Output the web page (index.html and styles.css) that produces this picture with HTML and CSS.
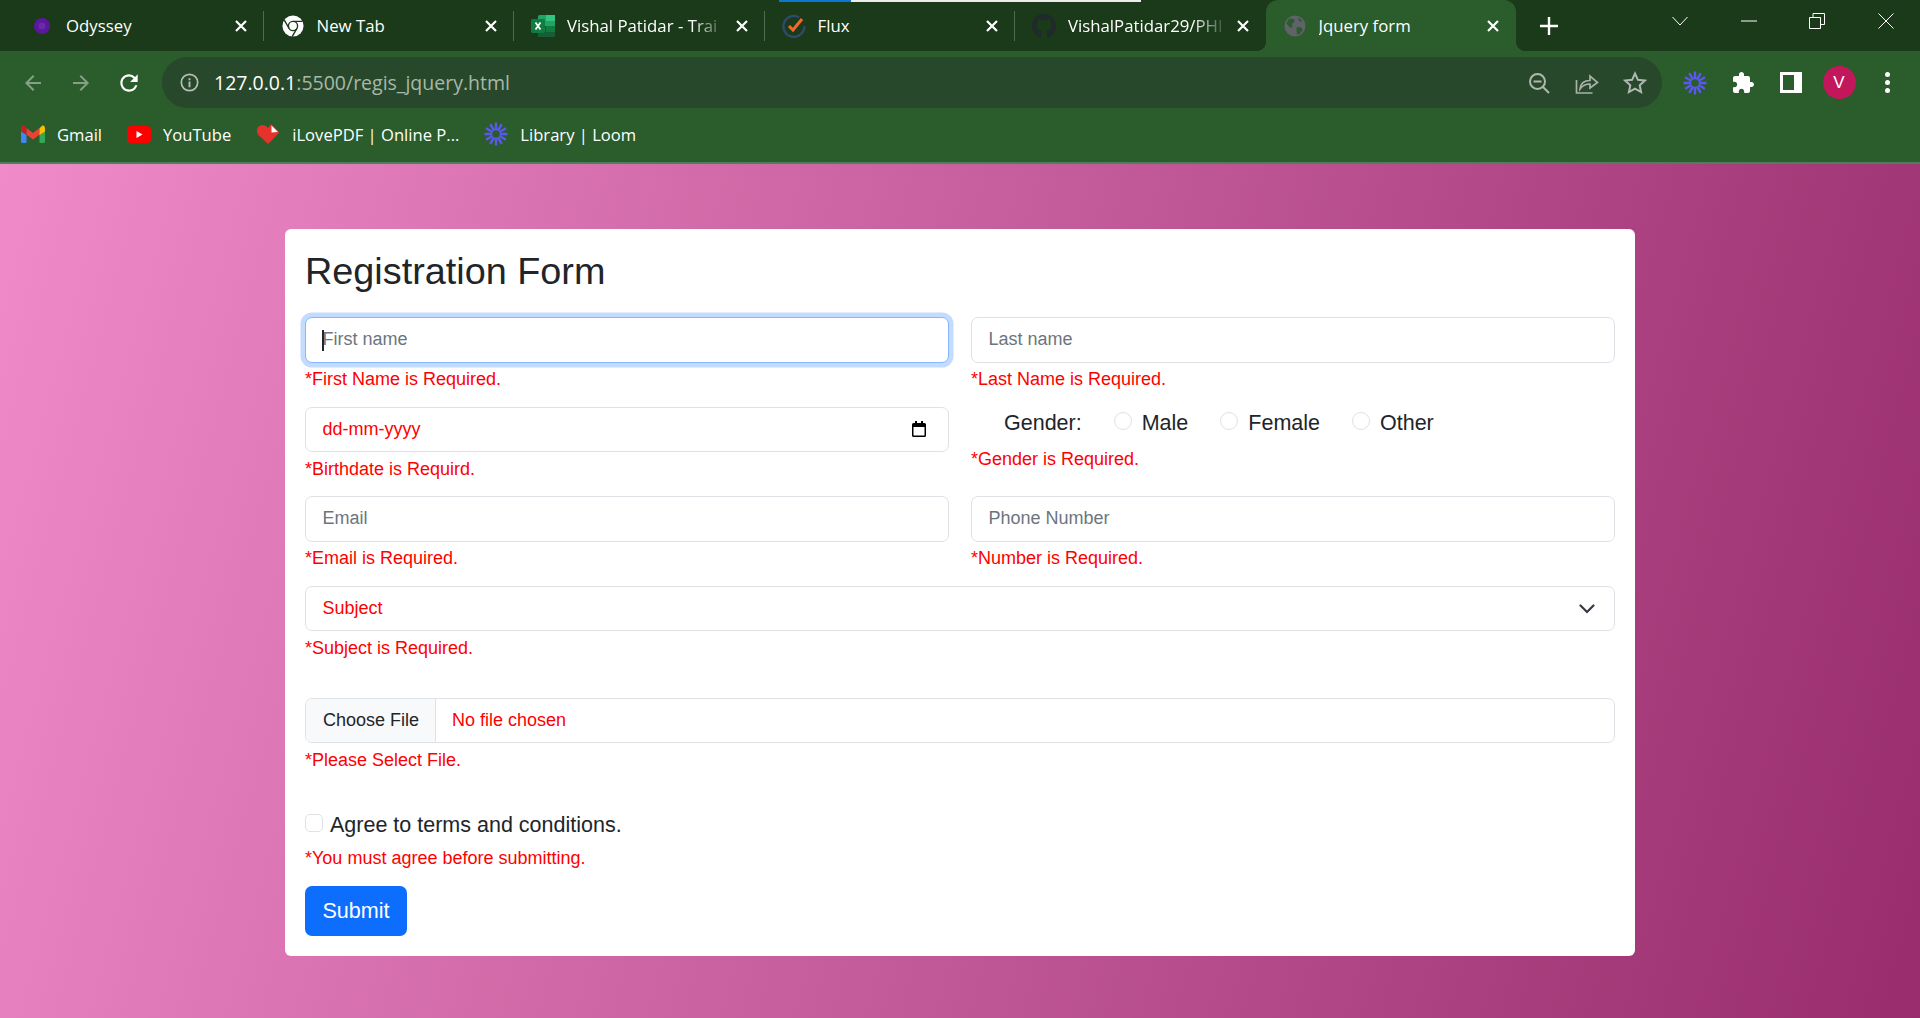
FILE: index.html
```html
<!DOCTYPE html>
<html lang="en">
<head>
    <meta charset="UTF-8">
    <meta name="viewport" content="width=device-width, initial-scale=1.0">
    <link rel="stylesheet" href="styles.css">
    <title>Jquery form</title>
</head>
<body>
<svg class="defs" width="0" height="0">
    <symbol id="loom" viewBox="0 0 24 24">
        <path fill="none" stroke="#5a58f0" stroke-width="2.4" d="M12 7V.5M14.5 7.67l3.25-5.63M16.33 9.5l5.63-3.25M17 12h6.5M16.33 14.5l5.63 3.25M14.5 16.33l3.25 5.63M12 17v6.5M9.5 16.33l-3.25 5.63M7.67 14.5l-5.63 3.25M7 12H.5M7.67 9.5L2.04 6.25M9.5 7.67L6.25 2.04"/>
        <circle cx="12" cy="12" r="4.6" fill="none" stroke="#5a58f0" stroke-width="1.6"/>
    </symbol>
    <symbol id="close" viewBox="0 0 14 14">
        <path stroke="#fff" stroke-width="2.2" d="M2 2l10 10M12 2L2 12"/>
    </symbol>
</svg>

<div class="capture-bar"><span class="capture-done"></span></div>

<div class="tabstrip">
    <div class="tab">
        <svg class="favicon" viewBox="0 0 18 18"><circle cx="9" cy="9" r="8" fill="#5a189a"/><circle cx="9" cy="9" r="3.5" fill="#6a2ab0"/></svg>
        <span class="tab-title">Odyssey</span>
        <svg class="tab-close"><use href="#close"/></svg>
    </div>
    <div class="tab">
        <svg class="favicon chrome" viewBox="0 0 24 24">
            <circle cx="12" cy="12" r="11.5" fill="#fff"/>
            <circle cx="12" cy="12" r="5" fill="#fff" stroke="#1a3a1a" stroke-width="1.5"/>
            <path stroke="#1a3a1a" stroke-width="1.5" fill="none" d="M12 7h10.5M7.7 14.5L2.5 5.5M16.3 14.5l-5.2 9"/>
        </svg>
        <span class="tab-title">New Tab</span>
        <svg class="tab-close"><use href="#close"/></svg>
    </div>
    <div class="tab">
        <svg class="favicon large" viewBox="0 0 24 24">
            <rect x="7" y="1" width="17" height="22" rx="1.5" fill="#21a366"/>
            <rect x="15" y="1" width="9" height="6" fill="#33c481"/>
            <rect x="15" y="12" width="9" height="6" fill="#107c41"/>
            <rect x="7" y="12" width="8" height="6" fill="#185c37"/>
            <rect x="7" y="18" width="17" height="5" fill="#185c37"/>
            <rect x="0" y="5" width="14" height="14" rx="1.5" fill="#107c41"/>
            <path stroke="#fff" stroke-width="1.8" d="M4.5 8.5l5 7M9.5 8.5l-5 7"/>
        </svg>
        <span class="tab-title fade">Vishal Patidar - Trai</span>
        <svg class="tab-close"><use href="#close"/></svg>
    </div>
    <div class="tab">
        <svg class="favicon large" viewBox="0 0 24 24">
            <path fill="none" stroke="#2f4a6b" stroke-width="2.4" d="M17 3.200A10.500 10.500 0 1 0 22.400 12"/>
            <path fill="none" stroke="#f2682a" stroke-width="3" d="M7 12l4 4 9-11"/>
        </svg>
        <span class="tab-title">Flux</span>
        <svg class="tab-close"><use href="#close"/></svg>
    </div>
    <div class="tab no-sep">
        <svg class="favicon large" viewBox="0 0 16 16"><path fill="#20292c" d="M8 0C3.58 0 0 3.58 0 8c0 3.54 2.29 6.53 5.47 7.59.4.07.55-.17.55-.38 0-.19-.01-.82-.01-1.49-2.01.37-2.53-.49-2.69-.94-.09-.23-.48-.94-.82-1.13-.28-.15-.68-.52-.01-.53.63-.01 1.08.58 1.23.82.72 1.21 1.87.87 2.33.66.07-.52.28-.87.51-1.07-1.78-.2-3.64-.89-3.64-3.95 0-.87.31-1.59.82-2.15-.08-.2-.36-1.02.08-2.12 0 0 .67-.21 2.2.82.64-.18 1.32-.27 2-.27s1.36.09 2 .27c1.53-1.04 2.2-.82 2.2-.82.44 1.1.16 1.92.08 2.12.51.56.82 1.27.82 2.15 0 3.07-1.87 3.75-3.65 3.95.29.25.54.73.54 1.48 0 1.07-.01 1.93-.01 2.2 0 .21.15.46.55.38A8.013 8.013 0 0016 8c0-4.42-3.58-8-8-8z"/></svg>
        <span class="tab-title fade">VishalPatidar29/PHI</span>
        <svg class="tab-close"><use href="#close"/></svg>
    </div>
    <div class="tab active">
        <svg class="favicon globe" viewBox="0 0 24 24">
            <circle cx="12" cy="12" r="11.5" fill="#5f6368"/>
            <path fill="#2a5c2c" d="M6 3.5l5 1 .5 3-3 2 1 3.5-3 1-4-5zM14 13l5 .5 1.5 3-4 4.5-2 .5-1-4zM15 2.5l5 3.5-3 1.5z"/>
        </svg>
        <span class="tab-title">Jquery form</span>
        <svg class="tab-close"><use href="#close"/></svg>
    </div>
    <svg class="new-tab" viewBox="0 0 18 18"><path stroke="#fff" stroke-width="2.4" d="M9 0v18M0 9h18"/></svg>
    <div class="window-controls">
        <div class="win-btn"><svg width="16" height="10" viewBox="0 0 16 10"><path fill="none" stroke="#fff" d="M.5 1l7.5 8 7.500-8"/></svg></div>
        <div class="win-btn"><svg width="16" height="2" viewBox="0 0 16 2"><path stroke="#fff" d="M0 1h16"/></svg></div>
        <div class="win-btn"><svg width="16" height="16" viewBox="0 0 16 16"><path fill="none" stroke="#fff" d="M.5 4.500h11v11H.5zM4 4.500V.5h11.500v11H11.500"/></svg></div>
        <div class="win-btn"><svg width="16" height="16" viewBox="0 0 16 16"><path stroke="#fff" d="M.5.5l15 15M15.500.5l-15 15"/></svg></div>
    </div>
</div>

<div class="toolbar">
    <div class="nav-row">
        <div class="tool-btn"><svg viewBox="0 0 24 24"><path fill="#86a088" d="M20 11H7.830l5.590-5.590L12 4l-8 8 8 8 1.410-1.410L7.830 13H20z"/></svg></div>
        <div class="tool-btn"><svg viewBox="0 0 24 24"><path fill="#86a088" d="M4 11h12.170l-5.590-5.590L12 4l8 8-8 8-1.410-1.410L16.170 13H4z"/></svg></div>
        <div class="tool-btn"><svg class="reload" viewBox="0 0 24 24"><path fill="#fff" d="M17.650 6.350A7.958 7.958 0 0 0 12 4c-4.420 0-7.990 3.580-7.990 8s3.570 8 7.990 8c3.730 0 6.840-2.550 7.730-6h-2.080A5.990 5.990 0 0 1 12 18c-3.310 0-6-2.690-6-6s2.690-6 6-6c1.660 0 3.140.69 4.220 1.780L13 11h7V4z"/></svg></div>
        <div class="omnibox">
            <svg class="info" viewBox="0 0 20 20"><circle cx="10" cy="10" r="8.600" fill="none" stroke="#b5bfb6" stroke-width="1.800"/><path fill="#b5bfb6" d="M9 9h2v6H9zM9 5.500h2v2H9z"/></svg>
            <span class="url"><span class="url-host">127.0.0.1</span>:5500/regis_jquery.html</span>
            <div class="omni-actions">
                <div class="tool-btn"><svg viewBox="0 0 24 24"><g fill="none" stroke="#b0b8b0" stroke-width="2"><circle cx="10.500" cy="10.500" r="7.500"/><path d="M6.500 10.500h8M16 16l6 6"/></g></svg></div>
                <div class="tool-btn"><svg viewBox="0 0 24 24"><g fill="none" stroke="#a8b2a8" stroke-width="1.700"><path d="M1.500 9v13h16"/><path d="M5 18c.5-5 4-8.500 10-8.500V5l7.500 6.500L15 17v-4c-4 0-7.500 1.500-10 5z"/></g></svg></div>
                <div class="tool-btn"><svg viewBox="0 0 24 24"><path fill="none" stroke="#b0b8b0" stroke-width="2" d="M12 2.500l2.900 6.300 6.900.8-5.100 4.700 1.400 6.800-6.100-3.400-6.100 3.400 1.400-6.800-5.100-4.700 6.900-.8z"/></svg></div>
            </div>
        </div>
        <div class="ext-icons">
            <div class="tool-btn"><svg class="ext-loom"><use href="#loom"/></svg></div>
            <div class="tool-btn"><svg viewBox="0 0 24 24"><path fill="#fff" d="M20.500 11H19V7c0-1.100-.9-2-2-2h-4V3.500C13 2.120 11.880 1 10.500 1S8 2.120 8 3.500V5H4c-1.100 0-1.990.9-1.990 2v3.800H3.500c1.490 0 2.700 1.210 2.700 2.700s-1.210 2.700-2.700 2.700H2V20c0 1.100.9 2 2 2h3.800v-1.500c0-1.490 1.210-2.700 2.700-2.700 1.490 0 2.700 1.210 2.700 2.700V22H17c1.100 0 2-.9 2-2v-4h1.500c1.380 0 2.500-1.120 2.500-2.500S21.880 11 20.500 11z"/></svg></div>
            <div class="tool-btn"><span class="side-panel"></span></div>
            <div class="tool-btn"><span class="avatar">V</span></div>
            <div class="tool-btn"><span class="dots"><i></i><i></i><i></i></span></div>
        </div>
    </div>
    <div class="bookmarks">
        <div class="bookmark">
            <svg width="24" height="18" viewBox="0 0 24 18">
                <path fill="#4285f4" d="M0 3v13.500A1.500 1.500 0 0 0 1.500 18H5.500V7z"/>
                <path fill="#34a853" d="M18.500 7v11h4a1.500 1.500 0 0 0 1.500-1.500V3z"/>
                <path fill="#ea4335" d="M5.500 3v6.500L12 14.500l6.500-5V3L12 8z"/>
                <path fill="#c5221f" d="M0 3.500v3l5.500 3.500V3.200L3.200.9C1.700-.2 0 1 0 3.500z"/>
                <path fill="#fbbc04" d="M18.500 3.200V10L24 6.500v-3C24 1 22.300-.2 20.800.9z"/>
            </svg>
            <span>Gmail</span>
        </div>
        <div class="bookmark">
            <svg width="24" height="17" viewBox="0 0 24 17"><rect width="24" height="17" rx="4" fill="#f00"/><path fill="#fff" d="M9.500 5l6 3.500-6 3.500z"/></svg>
            <span>YouTube</span>
        </div>
        <div class="bookmark">
            <svg width="24" height="24" viewBox="0 0 24 24">
                <path fill="#e5322d" d="M12 22L2.500 13C-.5 9.500 1 3.500 6 3c2.500-.2 4.500 1 6 3l3-4 8 8z"/>
                <path fill="#e5322d" d="M12 22l11-11-3-2z"/>
                <path fill="#fff" d="M15.500 3.500l6.500 6.500-6.500.5z"/>
            </svg>
            <span>iLovePDF | Online P...</span>
        </div>
        <div class="bookmark">
            <svg width="24" height="24"><use href="#loom"/></svg>
            <span>Library | Loom</span>
        </div>
    </div>
</div>

<main class="page">
    <form class="card">
        <h2 class="form-title">Registration Form</h2>
        <div class="form-grid">
            <div class="field">
                <div class="caret-wrap">
                    <input class="control focused" type="text" placeholder="First name">
                    <span class="caret"></span>
                </div>
                <div class="error">*First Name is Required.</div>
            </div>
            <div class="field">
                <input class="control" type="text" placeholder="Last name">
                <div class="error">*Last Name is Required.</div>
            </div>
            <div class="field">
                <input class="control date-control" type="text" placeholder="dd-mm-yyyy">
                <div class="error">*Birthdate is Requird.</div>
            </div>
            <div class="field">
                <div class="gender-row">
                    <span>Gender:</span>
                    <label class="radio-option"><input type="radio" name="gender">Male</label>
                    <label class="radio-option"><input type="radio" name="gender">Female</label>
                    <label class="radio-option"><input type="radio" name="gender">Other</label>
                </div>
                <div class="error gender-error">*Gender is Required.</div>
            </div>
            <div class="field">
                <input class="control" type="text" placeholder="Email">
                <div class="error">*Email is Required.</div>
            </div>
            <div class="field">
                <input class="control" type="text" placeholder="Phone Number">
                <div class="error">*Number is Required.</div>
            </div>
            <div class="field wide">
                <select class="control subject-control">
                    <option>Subject</option>
                </select>
                <div class="error">*Subject is Required.</div>
            </div>
            <div class="field wide file-field">
                <div class="file-control">
                    <span class="file-button">Choose File</span>
                    <span class="file-name">No file chosen</span>
                </div>
                <div class="error">*Please Select File.</div>
            </div>
        </div>
        <label class="terms"><input type="checkbox">Agree to terms and conditions.</label>
        <div class="error">*You must agree before submitting.</div>
        <button type="button" class="submit-btn">Submit</button>
    </form>
</main>
</body>
</html>
```

FILE: styles.css
```css
* {box-sizing: border-box;}
html, body {height: 100%;}
body {margin: 0; display: flex; flex-direction: column; position: relative; overflow: hidden;
font-family: "Liberation Sans", Arial, sans-serif; color: #212529;}
.defs {position: absolute;}

/* browser chrome */
.capture-bar {position: absolute; top: 0; left: 779px; width: 362px; height: 2px; background-color: #ececec; z-index: 2;}
.capture-done {display: block; width: 72px; height: 2px; background-color: #0a78d0;}

.tabstrip {display: flex; align-items: stretch; height: 51px; padding-left: 13px; background-color: #1a3a1a; isolation: isolate;
font-family: "Open Sans", sans-serif; font-size: 16.8px; color: #fff; flex: none;}
.tab {position: relative; display: flex; align-items: center; width: 250.5px; padding: 0 16px 0 20px; flex: none;}
.tab::after {content: ""; position: absolute; right: 0; top: 11px; height: 30px; width: 1px; background-color: #4f6b50;}
.tab.no-sep::after {display: none;}
.favicon {width: 18px; height: 18px; flex: none; margin-right: 15px;}
.favicon.chrome {width: 22px; height: 22px; margin: 0 13px 0 -2px;}
.favicon.large {width: 24px; height: 24px; margin: 0 12px 0 -3px;}
.favicon.globe {width: 22px; height: 22px; margin: 0 13px 0 -2px;}
.tab-title {flex: 1; overflow: hidden; white-space: nowrap;}
.tab-title.fade {-webkit-mask-image: linear-gradient(to right, #000 78%, transparent 100%); mask-image: linear-gradient(to right, #000 78%, transparent 100%);}
.tab-close {width: 14px; height: 14px; flex: none; margin-left: 8px;}
.tab.active {background-color: #2a5c2c; border-radius: 12px 12px 0 0;}
.tab.active::after {display: none;}
.tab.active::before {content: ""; position: absolute; left: -10px; right: -10px; bottom: 0; height: 10px; z-index: -1;
background:
    radial-gradient(circle at 0 0, #1a3a1a 10px, #2a5c2c 10.5px) left / 10px 10px no-repeat,
    radial-gradient(circle at 100% 0, #1a3a1a 10px, #2a5c2c 10.5px) right / 10px 10px no-repeat;}
.new-tab {width: 18px; height: 18px; margin: 17px 0 0 24px; flex: none;}
.window-controls {display: flex; margin-left: auto; height: 42px;}
.win-btn {width: 68.5px; display: flex; align-items: center; justify-content: center;}

.toolbar {background-color: #2a5c2c; border-bottom: 2px solid #4e7f56; height: 113px; flex: none;
font-family: "Open Sans", sans-serif; color: #fff;}
.nav-row {display: flex; align-items: center; padding: 6px 0 0 9px;}
.tool-btn {width: 48px; height: 48px; display: flex; align-items: center; justify-content: center; flex: none;}
.tool-btn svg {width: 24px; height: 24px;}
.tool-btn svg.reload {width: 26px; height: 26px;}
.omnibox {display: flex; align-items: center; width: 1500px; height: 51px; margin-left: 9px; padding: 0 3px 0 18px;
border-radius: 26px; background-color: #27482b; flex: none;}
.info {width: 19px; height: 19px; flex: none; margin-right: 15px;}
.url {font-size: 19.5px; color: #a9b8aa; white-space: nowrap;}
.url-host {color: #fff;}
.omni-actions {display: flex; margin-left: auto;}
.ext-icons {display: flex; margin-left: 9px;}
.side-panel {display: block; width: 22px; height: 21px; background-color: #fff; position: relative;}
.side-panel::before {content: ""; position: absolute; left: 3px; top: 3px; width: 11px; height: 15px; background-color: #2a5c2c;}
.avatar {display: flex; align-items: center; justify-content: center; width: 33px; height: 33px; border-radius: 50%;
background-color: #c2185b; font-family: "Liberation Sans", sans-serif; font-size: 17px; color: #fff;}
.dots {display: flex; flex-direction: column; gap: 3px;}
.dots i {display: block; width: 5px; height: 5px; border-radius: 50%; background-color: #fff;}

.bookmarks {display: flex; align-items: center; gap: 25px; height: 46px; margin-top: 3px; padding-left: 21px; font-size: 16.6px;}
.bookmark {display: flex; align-items: center; gap: 12px; white-space: nowrap;}

/* page */
.page {flex: 1; padding-top: 65px; background: linear-gradient(105deg, #f08ac8 0%, #982c6c 100%);}
.card {width: 1350px; margin: 0 auto; padding: 20px; background-color: #fff; border-radius: 6px;}
.form-title {margin: 0 0 24px; font-size: 37.8px; font-weight: 400; line-height: 44px;}
.form-grid {display: grid; grid-template-columns: 644px 644px; gap: 13.6px 22px;}
.wide {grid-column: 1 / 3;}
.file-field {margin-top: 22.5px;}

.control {display: block; width: 100%; height: 45.6px; padding: 0 16.4px; border: 1px solid #dee2e6; border-radius: 7px;
background-color: #fff; font: 18px "Liberation Sans", Arial, sans-serif; color: #212529; outline: none;}
.control::placeholder {color: #6c757d; opacity: 1;}
.control.focused {border-color: #86b7fe; box-shadow: 0 0 0 4.5px rgba(13, 110, 253, .25);}
.caret-wrap {position: relative;}
.caret {position: absolute; left: 17px; top: 13px; width: 1.5px; height: 21px; background-color: #212529;}
.date-control {background: #fff url("data:image/svg+xml,%3Csvg xmlns='http://www.w3.org/2000/svg' width='14' height='16' viewBox='0 0 14 16'%3E%3Cpath fill='%23000' d='M3 0h2v2h4V0h2v2h1.500A1.500 1.500 0 0 1 14 3.500v11a1.500 1.500 0 0 1-1.500 1.500h-11A1.500 1.500 0 0 1 0 14.500v-11A1.500 1.500 0 0 1 1.500 2H3zM1.500 6v8.500h11V6z'/%3E%3C/svg%3E") no-repeat right 22px center;}
.date-control::placeholder {color: #f00;}
.subject-control {appearance: none; -webkit-appearance: none; color: #f00; padding-bottom: 2px;
background: #fff url("data:image/svg+xml,%3Csvg xmlns='http://www.w3.org/2000/svg' width='16' height='10' viewBox='0 0 16 10'%3E%3Cpath fill='none' stroke='%23343a40' stroke-width='2.200' stroke-linecap='round' d='M1.500 1.500L8 8l6.500-6.500'/%3E%3C/svg%3E") no-repeat right 19px center;}

.file-control {display: flex; align-items: stretch; height: 45.6px; border: 1px solid #dee2e6; border-radius: 7px; overflow: hidden; font-size: 18px;}
.file-button {display: flex; align-items: center; padding: 0 16px 0 17px; background-color: #f8f9fa; border-right: 1px solid #dee2e6; color: #212529;}
.file-name {display: flex; align-items: center; padding-left: 16px; color: #f00;}

.error {margin-top: 3.4px; font-size: 18px; line-height: 27px; color: #f00;}

.gender-row {display: flex; align-items: center; gap: 32px; height: 34px; padding-left: 33px; font-size: 21.5px;}
.gender-error {margin-top: 5px;}
.radio-option {display: flex; align-items: center; gap: 10px;}
.radio-option input {appearance: none; -webkit-appearance: none; width: 18px; height: 18px; margin: 0 0 5px; border: 1px solid #dee2e6; border-radius: 50%; background-color: #fff;}

.terms {display: flex; align-items: flex-start; gap: 7px; margin-top: 35.5px; font-size: 21.5px; line-height: 32px;}
.terms input {appearance: none; -webkit-appearance: none; width: 18px; height: 18px; margin: 5px 0 0; border: 1px solid #dee2e6; border-radius: 5px; background-color: #fff; flex: none;}

.submit-btn {display: block; width: 102px; height: 50px; margin-top: 14px; padding: 0; border: 0; border-radius: 7px;
background-color: #0d6efd; color: #fff; font: 21.6px "Liberation Sans", Arial, sans-serif;}
```
